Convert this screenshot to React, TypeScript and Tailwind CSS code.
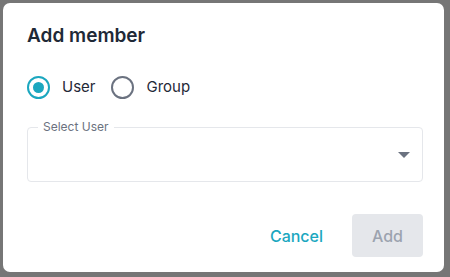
import React, { useState } from 'react';

const Radio = ({ checked, label, onClick }: { checked: boolean; label: string; onClick: () => void }) => (
  <label className="flex items-center gap-3 cursor-pointer" onClick={onClick}>
    <span
      className={
        checked
          ? 'flex h-[23px] w-[23px] items-center justify-center rounded-full border-2 border-[#1ba7bf]'
          : 'flex h-[23px] w-[23px] items-center justify-center rounded-full border-2 border-[#6b7280]'
      }
    >
      {checked && <span className="h-[11px] w-[11px] rounded-full bg-[#1ba7bf]" />}
    </span>
    <span className="text-[15px] text-[#1f2937]">{label}</span>
  </label>
);

export default function App() {
  const [kind, setKind] = useState<'user' | 'group'>('user');

  return (
    <div className="h-[277px] w-[450px] bg-[#767676] p-[3px] pr-[6px] pb-[5px] font-['Inter',sans-serif]">
      <div className="flex h-full flex-col rounded-[7px] bg-white pl-6 pr-[21px] pt-[19px]">
        <h2 className="text-[19px] font-semibold leading-7 text-[#1f2937]">Add member</h2>

        <div className="mt-[26px] flex items-center gap-4">
          <Radio checked={kind === 'user'} label="User" onClick={() => setKind('user')} />
          <Radio checked={kind === 'group'} label="Group" onClick={() => setKind('group')} />
        </div>

        <fieldset className="mt-[21px] h-[62px] rounded border border-[#e5e7eb] px-[10px]">
          <legend className="px-[5px] text-xs leading-[14px] text-[#6b7280]">Select User</legend>
          <div className="flex h-[42px] items-center justify-end pr-[2px]">
            <svg width="12" height="6" viewBox="0 0 12 6">
              <path d="M0 0h12L6 6z" fill="#6b7280" />
            </svg>
          </div>
        </fieldset>

        <div className="mt-[32px] flex items-center justify-end gap-[29px]">
          <button className="text-base font-medium text-[#1ba7bf]">Cancel</button>
          <button
            disabled
            className="h-[43px] w-[71px] rounded bg-[#e5e7eb] text-base font-medium text-[#9ca3af]"
          >
            Add
          </button>
        </div>
      </div>
    </div>
  );
}
